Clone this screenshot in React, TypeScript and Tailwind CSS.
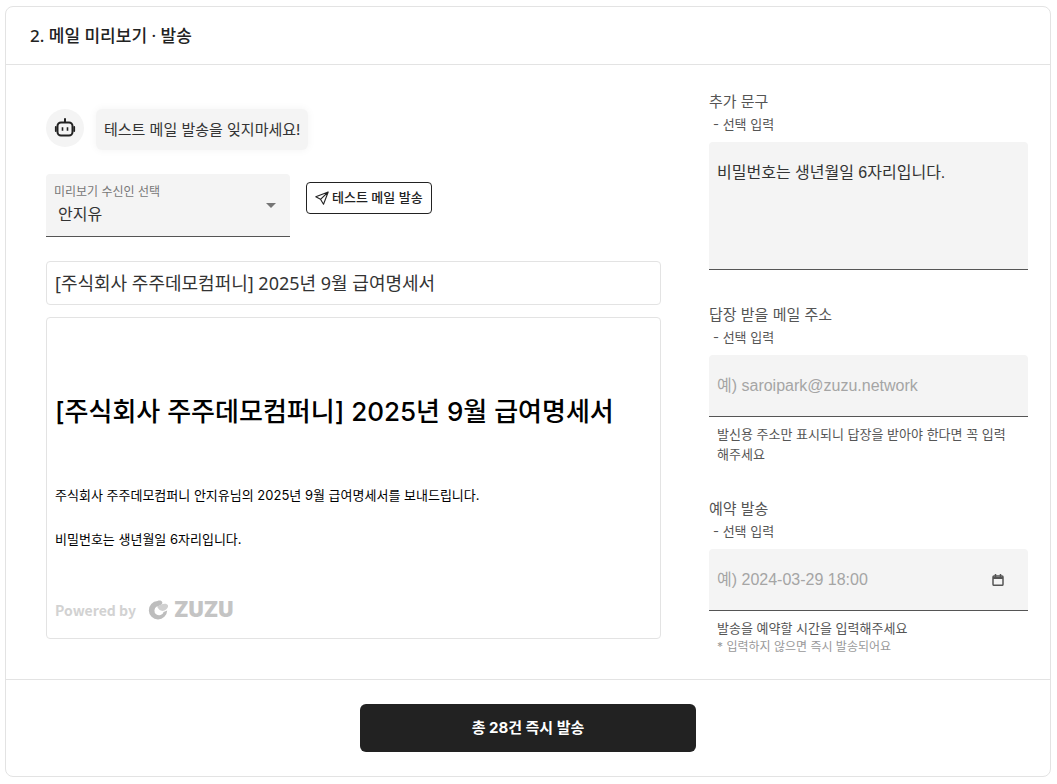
import { useState } from 'react';
import type { ReactNode } from 'react';

const RECIPIENTS = ['안지유'];
const COMPANY = '주식회사 주주데모컴퍼니';
const SUBJECT = `[${COMPANY}] 2025년 9월 급여명세서`;

function BotIcon() {
  return (
    <svg width="24" height="24" viewBox="0 0 24 24" fill="none" stroke="currentColor" strokeWidth="2" aria-hidden="true">
      <rect x="4.500" y="6.500" width="15" height="13" rx="3.500" />
      <path d="M12 3v3" strokeLinecap="round" />
      <path d="M9.500 11.200v3.600M14.500 11.200v3.600" strokeWidth="1.600" />
      <path d="M2.800 11v4M21.200 11v4" strokeLinecap="round" strokeWidth="1.800" />
    </svg>
  );
}

function SendIcon() {
  return (
    <svg
      width="14"
      height="14"
      viewBox="0 0 14 14"
      fill="none"
      stroke="currentColor"
      strokeWidth="1.100"
      strokeLinejoin="round"
      aria-hidden="true"
    >
      <path d="M13.200 1 .800 5.800l4.700 2.500L8.500 13.200zM13.200 1 5.500 8.300" />
    </svg>
  );
}

function CalendarIcon() {
  return (
    <svg width="12" height="12" viewBox="0 0 12 12" fill="none" stroke="currentColor" strokeWidth="1.500" aria-hidden="true">
      <rect x="1" y="2" width="10" height="9.300" rx="1" />
      <path d="M1 4h10" strokeWidth="2" />
      <path d="M3.500 0v3M8.500 0v3" />
    </svg>
  );
}

function ZuzuLogo() {
  return (
    <div className="flex items-center gap-1.5">
      <svg width="20" height="20" viewBox="0 0 20 20" aria-hidden="true">
        <path
          d="M9.500 1C11.500.200 13.800.600 14.300 2.200c.400 1.300-1 2.600-2.300 3.200-1 .500-2.200.500-3.200 1.100a4.700 4.700 0 1 0 6.800 5.500l3.600-1.500A9.200 9.200 0 1 1 9.500 1z"
          fill="#bdbdbd"
        />
        <path d="M9 6.500c2-.600 3.300-1.800 4.500-2.200 2.500-.800 6-.800 6.500 1.200.500 2.200-2 4.800-4.500 5.300C12.500 11.300 10.500 9.500 9 6.500z" fill="#d0d0d0" />
      </svg>
      <span className="text-[21px] leading-6 font-black text-[#c4c4c4]">ZUZU</span>
    </div>
  );
}

function Field({ id, label, children }: { id: string; label: string; children: ReactNode }) {
  return (
    <div>
      <label htmlFor={id} className="block text-[#555]">
        <span className="block text-[15px] leading-6">{label}</span>
        <span className="block pl-1 text-[13px] leading-5">- 선택 입력</span>
      </label>
      <div className="mt-2">{children}</div>
    </div>
  );
}

export default function App() {
  const [recipient, setRecipient] = useState(RECIPIENTS[0]);
  const [message, setMessage] = useState('비밀번호는 생년월일 6자리입니다.');
  const [replyTo, setReplyTo] = useState('');
  const [sendAt, setSendAt] = useState('');

  return (
    <div className="bg-white py-1.5 pr-1.5 pl-[5px] font-['Inter','Noto_Sans_CJK_KR',sans-serif] text-[#333]">
      <section className="rounded-lg border border-[#e3e3e3]">
        <header className="border-b border-[#e3e3e3] px-6 pt-[17px] pb-4">
          <h2 className="font-['Noto_Sans','Noto_Sans_CJK_KR',sans-serif] text-[17px] leading-6 font-medium text-[#222]">
            2. 메일 미리보기 · 발송
          </h2>
        </header>

        <div className="flex gap-12 pr-[22px] pl-10">
          {/* Preview */}
          <div className="min-w-0 flex-1 pt-11 pb-10">
            <div className="flex items-start gap-3">
              <div className="flex size-[38px] items-center justify-center rounded-full bg-[#f4f4f4] text-[#222]">
                <BotIcon />
              </div>
              <p className="rounded-md bg-[#f4f4f4] px-2 py-2 text-[15px] leading-[25px] shadow-[0_0_8px_rgba(0,0,0,0.05)]">
                테스트 메일 발송을 잊지마세요!
              </p>
            </div>

            <div className="mt-6 flex items-start gap-4">
              <div className="relative w-[244px] rounded-t border-b border-[#555] bg-[#f4f4f4] pt-2">
                <label htmlFor="recipient" className="block px-2 text-xs leading-5 text-[#777]">
                  미리보기 수신인 선택
                </label>
                <select
                  id="recipient"
                  value={recipient}
                  onChange={(e) => setRecipient(e.target.value)}
                  className="block h-[34px] w-full appearance-none px-3 pb-2.5 text-base outline-none"
                >
                  {RECIPIENTS.map((name) => (
                    <option key={name}>{name}</option>
                  ))}
                </select>
                <svg
                  width="10"
                  height="5"
                  viewBox="0 0 10 5"
                  fill="#757575"
                  aria-hidden="true"
                  className="pointer-events-none absolute top-[29px] right-3.5"
                >
                  <path d="M0 0h10L5 5z" />
                </svg>
              </div>
              <button
                type="button"
                className="mt-2 flex h-8 items-center gap-[3px] rounded border border-[#222] px-2 text-[13px] font-medium text-[#222]"
              >
                <SendIcon />
                테스트 메일 발송
              </button>
            </div>

            <p className="mt-6 rounded border border-[#e3e3e3] px-2 py-2 font-['Noto_Sans','Noto_Sans_CJK_KR',sans-serif] text-lg leading-[26px]">
              {SUBJECT}
            </p>

            <article className="mt-3 rounded border border-[#e3e3e3] px-2 pt-[74px] pb-4 text-black">
              <h1 className="text-[26px] leading-10 font-medium">{SUBJECT}</h1>
              <p className="mt-[52px] text-[13px] leading-[22px]">
                {COMPANY} {recipient}님의 2025년 9월 급여명세서를 보내드립니다.
              </p>
              <p className="mt-[22px] text-[13px] leading-[22px]">{message}</p>
              <div className="mt-12 flex items-center gap-3">
                <span className="font-['Noto_Sans_CJK_KR',sans-serif] text-sm leading-6 font-bold text-[#d2d2d2]">
                  Powered by
                </span>
                <ZuzuLogo />
              </div>
            </article>
          </div>

          {/* Options */}
          <form className="flex w-[319px] flex-col gap-[33px] pt-[25px] pb-5">
            <Field id="message" label="추가 문구">
              <textarea
                id="message"
                value={message}
                onChange={(e) => setMessage(e.target.value)}
                className="block h-32 w-full resize-none rounded-t border-b border-[#555] bg-[#f4f4f4] px-2 pt-[19px] font-['Liberation_Sans','Noto_Sans_CJK_KR',sans-serif] text-base outline-none"
              />
            </Field>
            <Field id="reply-to" label="답장 받을 메일 주소">
              <input
                id="reply-to"
                type="email"
                value={replyTo}
                onChange={(e) => setReplyTo(e.target.value)}
                placeholder="예) saroipark@zuzu.network"
                className="block h-[62px] w-full rounded-t border-b border-[#555] bg-[#f4f4f4] px-2 font-['Liberation_Sans','Noto_Sans_CJK_KR',sans-serif] text-base outline-none placeholder:text-[#a5a5a5]"
              />
              <p className="mt-[7px] pr-3 pl-2 text-[13px] leading-5 text-[#555]">
                발신용 주소만 표시되니 답장을 받아야 한다면 꼭 입력해주세요
              </p>
            </Field>
            <Field id="send-at" label="예약 발송">
              <div className="flex h-[62px] items-center rounded-t border-b border-[#555] bg-[#f4f4f4] pr-5 pl-2">
                <input
                  id="send-at"
                  type="text"
                  value={sendAt}
                  onChange={(e) => setSendAt(e.target.value)}
                  placeholder="예) 2024-03-29 18:00"
                  className="min-w-0 flex-1 font-['Liberation_Sans','Noto_Sans_CJK_KR',sans-serif] text-base outline-none placeholder:text-[#a5a5a5]"
                />
                <button type="button" aria-label="날짜 선택" className="p-1 text-[#555]">
                  <CalendarIcon />
                </button>
              </div>
              <p className="mt-[7px] pl-2 text-[13px] leading-5 text-[#555]">발송을 예약할 시간을 입력해주세요</p>
              <p className="pl-2 text-xs leading-[18px] text-[#999]">* 입력하지 않으면 즉시 발송되어요</p>
            </Field>
          </form>
        </div>

        <footer className="flex justify-center border-t border-[#e3e3e3] py-6">
          <button type="button" className="h-12 w-[336px] rounded-md bg-[#222] text-[15px] font-bold text-white">
            총 28건 즉시 발송
          </button>
        </footer>
      </section>
    </div>
  );
}
